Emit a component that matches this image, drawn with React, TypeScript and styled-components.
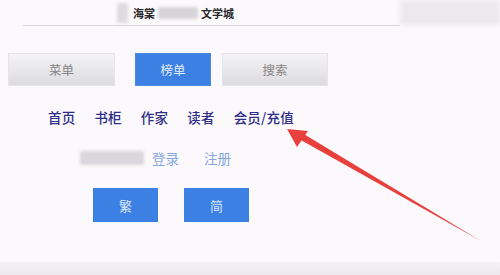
import styled, { createGlobalStyle } from "styled-components"

const GlobalStyle = createGlobalStyle`
  html, body {
    margin: 0;
    padding: 0;
    background: #fbf9fb;
  }
  body {
    font-family: "Noto Sans CJK SC", "Noto Sans", sans-serif;
  }
`

const Page = styled.div`
  position: relative;
  width: 500px;
  height: 275px;
  overflow: hidden;
  background: #fbf9fb;
  display: flex;
  flex-direction: column;
`

const TopBar = styled.div`
  display: flex;
  height: 26px;
`

const HeaderSide = styled.div`
  display: flex;
  align-items: center;
  margin-left: 23px;
  border-bottom: 1px solid #d9d6da;
  box-sizing: border-box;
  width: 377px;
  flex: none;
`

const Shade = styled.div`
  flex: 1;
  height: 25px;
  background: #ece9ed;
  filter: blur(2px);
`

const Blur = styled.div<{ $w: number; $h: number; $c?: string }>`
  width: ${p => p.$w}px;
  height: ${p => p.$h}px;
  background: ${p => p.$c || "#d6d4d8"};
  filter: blur(1.5px);
  border-radius: 2px;
`

const Title = styled.div`
  display: flex;
  align-items: center;
  margin-left: 94px;
  font-size: 11px;
  font-weight: 700;
  color: #2a2a2e;
  gap: 3px;
`

const ButtonRow = styled.div`
  display: flex;
  margin: 27px 0 0 8px;
`

const Btn = styled.div<{ $w: number; $primary?: boolean; $ml?: number }>`
  width: ${p => p.$w}px;
  height: 33px;
  margin-left: ${p => p.$ml || 0}px;
  display: flex;
  align-items: center;
  justify-content: center;
  font-size: 12.5px;
  color: ${p => (p.$primary ? "#e3ecfb" : "#858585")};
  background: ${p =>
    p.$primary ? "#3c80e3" : "linear-gradient(#f4f3f5, #dcdbde)"};
  border: 1px solid ${p => (p.$primary ? "#4a8ae6" : "#e6e4e8")};
  box-sizing: border-box;
`

const NavRow = styled.div`
  display: flex;
  margin: 22px 0 0 48px;
`

const NavLink = styled.div<{ $ml: number }>`
  margin-left: ${p => p.$ml}px;
  font-size: 13.5px;
  font-weight: 500;
  line-height: 18px;
  color: #2e2d88;
  letter-spacing: 0.2px;
`

const LoginRow = styled.div`
  display: flex;
  align-items: center;
  margin: 23px 0 0 80px;
`

const LoginLink = styled.div<{ $ml: number }>`
  margin-left: ${p => p.$ml}px;
  font-size: 13.5px;
  line-height: 18px;
  color: #86a7de;
`

const LangRow = styled.div`
  display: flex;
  margin: 21px 0 0 93px;
  gap: 26px;
`

const LangBtn = styled.div`
  width: 65px;
  height: 34px;
  display: flex;
  align-items: center;
  justify-content: center;
  background: #3c80e3;
  color: #dbe6fa;
  font-size: 13px;
`

const Bottom = styled.div`
  margin-top: auto;
  height: 13px;
  background: linear-gradient(#f3f1f4, #ebe9ec);
`

const Arrow = styled.svg`
  position: absolute;
  left: 0;
  top: 0;
  pointer-events: none;
`

export default function App() {
  return (
    <>
      <GlobalStyle />
      <Page>
        <TopBar>
          <HeaderSide>
            <Title>
              <Blur $w={11} $h={20} $c="#dddbe0" />
              <span style={{ marginLeft: 2 }}>海棠</span>
              <Blur $w={40} $h={12} />
              <span>文学城</span>
            </Title>
          </HeaderSide>
          <Shade />
        </TopBar>
        <ButtonRow>
          <Btn $w={107}>菜单</Btn>
          <Btn $w={76} $ml={20} $primary>
            榜单
          </Btn>
          <Btn $w={106} $ml={11}>
            搜索
          </Btn>
        </ButtonRow>
        <NavRow>
          <NavLink $ml={0}>首页</NavLink>
          <NavLink $ml={19}>书柜</NavLink>
          <NavLink $ml={19}>作家</NavLink>
          <NavLink $ml={19}>读者</NavLink>
          <NavLink $ml={19}>会员/充值</NavLink>
        </NavRow>
        <LoginRow>
          <Blur $w={64} $h={14} $c="#d9d7db" />
          <LoginLink $ml={8}>登录</LoginLink>
          <LoginLink $ml={25}>注册</LoginLink>
        </LoginRow>
        <LangRow>
          <LangBtn>繁</LangBtn>
          <LangBtn>简</LangBtn>
        </LangRow>
        <Bottom />
        <Arrow width="500" height="275" viewBox="0 0 500 275">
          <polygon points="481,241 299,139 302,133" fill="#e8403c" />
          <polygon points="287,129 308,131 297,147" fill="#e8403c" />
        </Arrow>
      </Page>
    </>
  )
}
